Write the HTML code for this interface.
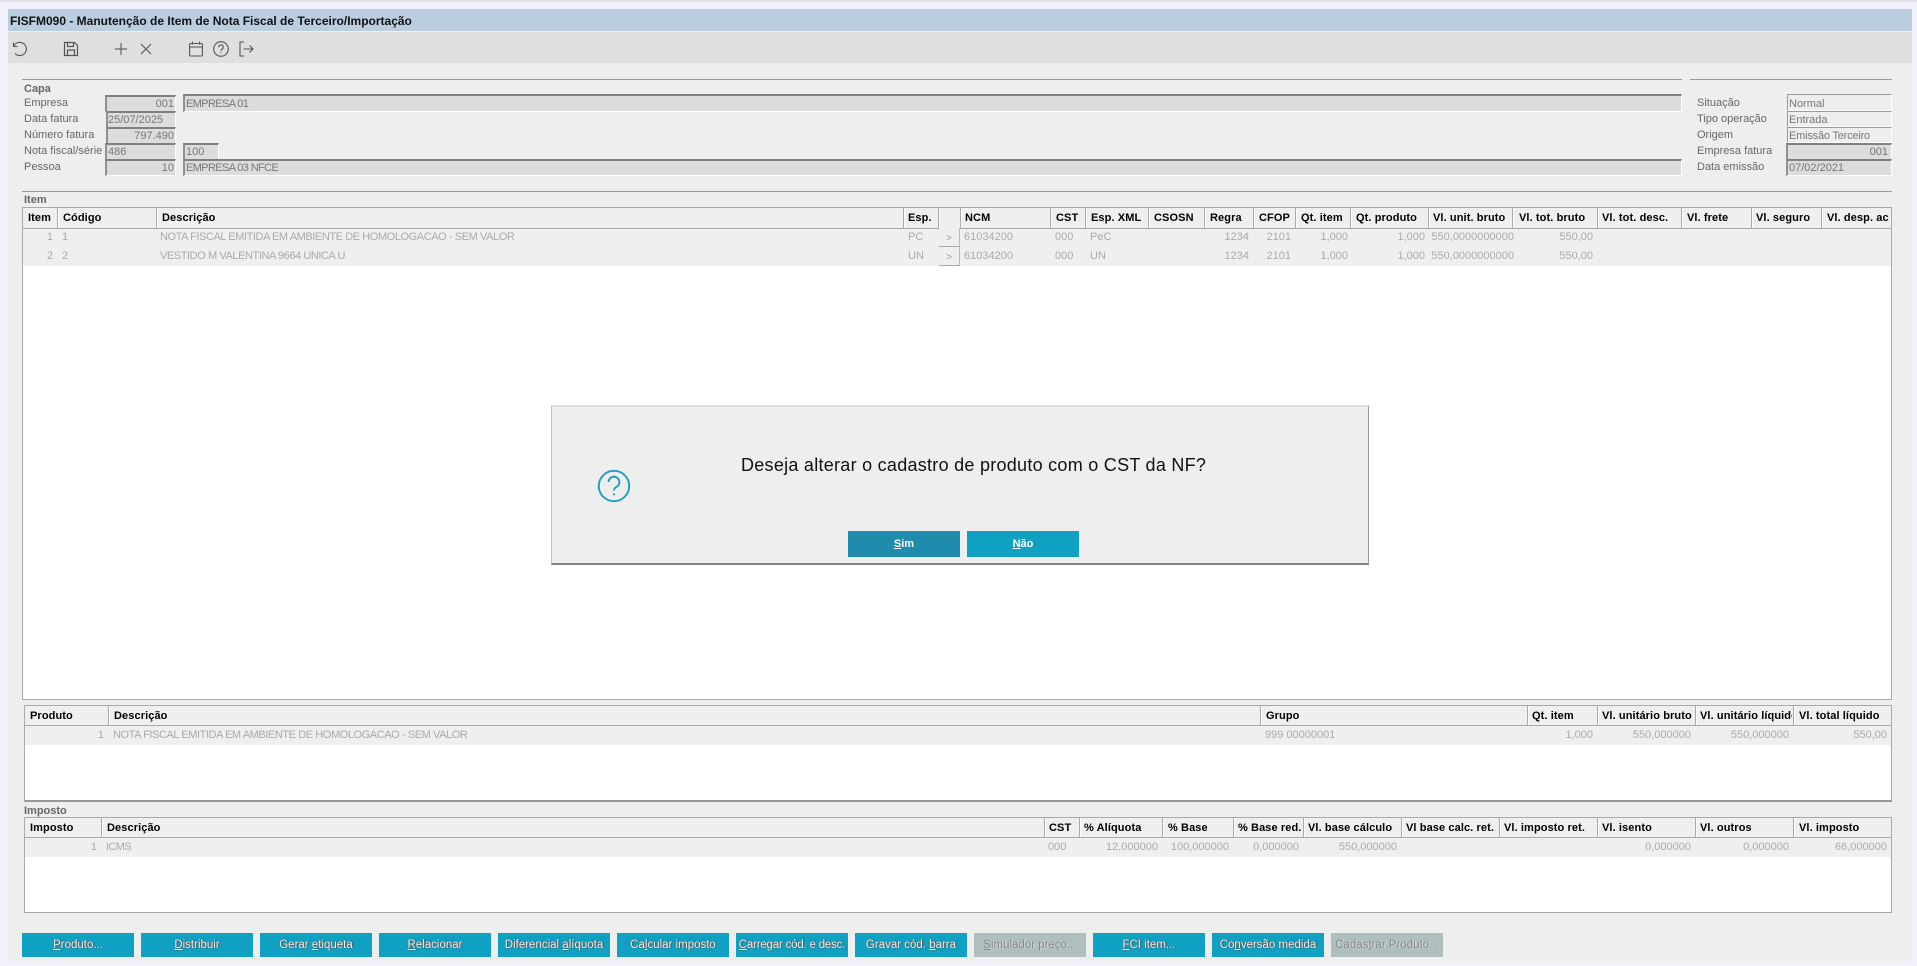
<!DOCTYPE html>
<html lang="pt"><head><meta charset="utf-8"><title>FISFM090</title>
<style>
html,body{margin:0;padding:0;width:1917px;height:966px;overflow:hidden;background:#f1f1fb;font-family:"Liberation Sans",Arial,sans-serif}
div,span.a{position:absolute;box-sizing:border-box}
.t{white-space:nowrap;font-size:11px;line-height:14px;height:14px;margin-top:1px}
.r{width:120px;margin-left:-120px;text-align:right}
.l{color:#666}
.v{color:#777}
.s{color:#666;font-weight:bold}
.h{color:#000;font-weight:bold;letter-spacing:.1px}
.d{color:#aaa}
.c{letter-spacing:-.42px}
.e{letter-spacing:-.62px}
.ln{height:1px;background:#999}
.f{background:#dcdcdc;border-top:2px solid #808080;border-left:2px solid #909090;border-right:1px solid #fff;border-bottom:1px solid #fff}
.g{background:#eee;border-top:1px solid #999;border-left:1px solid #999;border-right:1px solid #fff;border-bottom:1px solid #fff}
.fr{background:#fff;border:1px solid #aaa}
.hb{background:#efefef;border-bottom:1px solid #aaa}
.rw{background:#efefef}
.sp{width:1px;background:#aaa;box-shadow:1px 0 0 #fff}
.b{height:24px;top:933px;width:112px;background:#0fa0c2;color:#eee;font-size:11.5px;line-height:25px;text-align:center;white-space:nowrap;text-shadow:1px 0 1px #555,0 0 1px #555}
.b.o{background:#afbfbf;color:#808888;text-shadow:1px 0 1px #e4e4e4}
.pb{width:21px;height:19px;background:#efefef;border-right:1px solid #bbb;border-bottom:1px solid #aaa;color:#999;font-size:10px;line-height:21px;text-align:center}
svg{position:absolute;overflow:visible}
</style></head><body>
<!-- window -->
<div style="left:0;top:0;width:1917px;height:2px;background:#e2e2e2"></div>
<div style="left:8px;top:9px;width:1904px;height:957px;background:#eee"></div>
<div style="left:8px;top:9px;width:1904px;height:22px;background:#bacee0"></div>
<div style="left:8px;top:32px;width:1904px;height:31px;background:#dfdfdf"></div>
<div style="left:0;top:961px;width:1917px;height:5px;background:#f1f1fb"></div>
<div class="t" style="left:10px;top:13px;font-weight:bold;font-size:12px;color:#111">FISFM090 - Manutenção de Item de Nota Fiscal de Terceiro/Importação</div>

<!-- toolbar icons -->
<svg style="left:12px;top:41px" width="16" height="16" viewBox="0 0 16 16" fill="none" stroke="#555" stroke-width="1.1"><path d="M1.5 1.5V5.5H5.5"/><path d="M1.7 5.3A6.6 6.6 0 1 1 3 12.5"/></svg>
<svg style="left:63px;top:41px" width="16" height="16" viewBox="0 0 16 16" fill="none" stroke="#555" stroke-width="1.2"><path d="M1.5 1.5H11.5L14.5 4.5V14.5H1.5Z"/><path d="M4.5 1.5V5.5H10.5V1.5"/><path d="M4.5 14.5V9H11.5V14.5"/></svg>
<svg style="left:114px;top:42px" width="14" height="14" viewBox="0 0 14 14" fill="none" stroke="#666" stroke-width="1.2"><path d="M7 1V13M1 7H13"/></svg>
<svg style="left:140px;top:43px" width="12" height="12" viewBox="0 0 12 12" fill="none" stroke="#555" stroke-width="1.1"><path d="M1 1L11 11M11 1L1 11"/></svg>
<svg style="left:189px;top:41px" width="14" height="16" viewBox="0 0 14 16" fill="none" stroke="#555" stroke-width="1.1"><rect x=".6" y="2.5" width="12.8" height="12.5" rx="1"/><path d="M.6 6H13.4M3.5 .5V3.5M10.5 .5V3.5"/></svg>
<svg style="left:213px;top:41px" width="16" height="16" viewBox="0 0 16 16" fill="none" stroke="#555" stroke-width="1.1"><circle cx="8" cy="8" r="7.3"/><path d="M5.8 6.2A2.2 2.2 0 1 1 8.8 8.2C8.2 8.5 8 9 8 10"/><path d="M8 11.3V12.3"/></svg>
<svg style="left:239px;top:41px" width="15" height="16" viewBox="0 0 15 16" fill="none" stroke="#555" stroke-width="1.1"><path d="M5 1H1V15H5"/><path d="M4.5 8H14M10.5 4.5L14 8L10.5 11.5"/></svg>

<!-- Capa -->
<div class="ln" style="left:22px;top:79px;width:1660px"></div>
<div class="ln" style="left:1690px;top:79px;width:202px"></div>
<div class="t s" style="left:24px;top:81px">Capa</div>
<div class="t l" style="left:24px;top:95px">Empresa</div>
<div class="t l" style="left:24px;top:111px">Data fatura</div>
<div class="t l" style="left:24px;top:127px">Número fatura</div>
<div class="t l" style="left:24px;top:143px">Nota fiscal/série</div>
<div class="t l" style="left:24px;top:159px">Pessoa</div>

<div class="f" style="left:105px;top:95px;width:71px;height:17px"></div>
<div class="f" style="left:183px;top:94px;width:1499px;height:18px"></div>
<div class="f" style="left:106px;top:111px;width:70px;height:17px"></div>
<div class="f" style="left:106px;top:127px;width:70px;height:17px"></div>
<div class="f" style="left:105px;top:143px;width:71px;height:17px"></div>
<div class="f" style="left:183px;top:143px;width:36px;height:17px"></div>
<div class="f" style="left:105px;top:159px;width:71px;height:17px"></div>
<div class="f" style="left:183px;top:159px;width:1499px;height:17px"></div>
<div class="t v r" style="left:174px;top:96px">001</div>
<div class="t v e" style="left:186px;top:96px">EMPRESA 01</div>
<div class="t v" style="left:108px;top:112px">25/07/2025</div>
<div class="t v r" style="left:174px;top:128px">797.490</div>
<div class="t v" style="left:108px;top:144px">486</div>
<div class="t v" style="left:186px;top:144px">100</div>
<div class="t v r" style="left:174px;top:160px">10</div>
<div class="t v e" style="left:186px;top:160px">EMPRESA 03 NFCE</div>

<!-- right group -->
<div class="t l" style="left:1697px;top:95px">Situação</div>
<div class="t l" style="left:1697px;top:111px">Tipo operação</div>
<div class="t l" style="left:1697px;top:127px">Origem</div>
<div class="t l" style="left:1697px;top:143px">Empresa fatura</div>
<div class="t l" style="left:1697px;top:159px">Data emissão</div>
<div class="g" style="left:1787px;top:94px;width:105px;height:17px"></div>
<div class="g" style="left:1787px;top:111px;width:105px;height:16px"></div>
<div class="g" style="left:1787px;top:127px;width:105px;height:16px"></div>
<div class="f" style="left:1786px;top:143px;width:106px;height:17px"></div>
<div class="f" style="left:1786px;top:159px;width:106px;height:17px"></div>
<div class="t v" style="left:1789px;top:96px">Normal</div>
<div class="t v" style="left:1789px;top:112px">Entrada</div>
<div class="t v" style="left:1789px;top:128px;letter-spacing:-.2px">Emissão Terceiro</div>
<div class="t v r" style="left:1888px;top:144px">001</div>
<div class="t v" style="left:1789px;top:160px">07/02/2021</div>

<!-- Item -->
<div class="ln" style="left:22px;top:191px;width:1870px"></div>
<div class="t s" style="left:24px;top:192px">Item</div>
<div class="fr" style="left:22px;top:207px;width:1870px;height:493px"></div>
<div class="hb" style="left:23px;top:208px;width:1868px;height:21px"></div>
<div class="rw" style="left:23px;top:229px;width:1868px;height:37px"></div>
<div class="sp" style="left:57px;top:208px;height:20px"></div>
<div class="sp" style="left:156px;top:208px;height:20px"></div>
<div class="sp" style="left:903px;top:208px;height:20px"></div>
<div class="sp" style="left:938px;top:208px;height:20px"></div>
<div class="sp" style="left:960px;top:208px;height:20px"></div>
<div class="sp" style="left:1050px;top:208px;height:20px"></div>
<div class="sp" style="left:1085px;top:208px;height:20px"></div>
<div class="sp" style="left:1148px;top:208px;height:20px"></div>
<div class="sp" style="left:1204px;top:208px;height:20px"></div>
<div class="sp" style="left:1253px;top:208px;height:20px"></div>
<div class="sp" style="left:1295px;top:208px;height:20px"></div>
<div class="sp" style="left:1350px;top:208px;height:20px"></div>
<div class="sp" style="left:1428px;top:208px;height:20px"></div>
<div class="sp" style="left:1512px;top:208px;height:20px"></div>
<div class="sp" style="left:1597px;top:208px;height:20px"></div>
<div class="sp" style="left:1681px;top:208px;height:20px"></div>
<div class="sp" style="left:1751px;top:208px;height:20px"></div>
<div class="sp" style="left:1821px;top:208px;height:20px"></div>
<div class="t h" style="left:28px;top:210px">Item</div>
<div class="t h" style="left:63px;top:210px">Código</div>
<div class="t h" style="left:162px;top:210px">Descrição</div>
<div class="t h" style="left:908px;top:210px">Esp.</div>
<div class="t h" style="left:965px;top:210px">NCM</div>
<div class="t h" style="left:1056px;top:210px">CST</div>
<div class="t h" style="left:1091px;top:210px">Esp. XML</div>
<div class="t h" style="left:1154px;top:210px">CSOSN</div>
<div class="t h" style="left:1210px;top:210px">Regra</div>
<div class="t h" style="left:1259px;top:210px">CFOP</div>
<div class="t h" style="left:1301px;top:210px">Qt. item</div>
<div class="t h" style="left:1356px;top:210px">Qt. produto</div>
<div class="t h" style="left:1433px;top:210px">Vl. unit. bruto</div>
<div class="t h" style="left:1519px;top:210px">Vl. tot. bruto</div>
<div class="t h" style="left:1602px;top:210px">Vl. tot. desc.</div>
<div class="t h" style="left:1687px;top:210px">Vl. frete</div>
<div class="t h" style="left:1756px;top:210px">Vl. seguro</div>
<div class="t h" style="left:1822px;top:210px;width:68px;overflow:hidden;padding-left:5px">Vl. desp. ac</div>

<div class="pb" style="left:939px;top:228px">&gt;</div>
<div class="pb" style="left:939px;top:247px">&gt;</div>

<div class="t d r" style="left:53px;top:229px">1</div>
<div class="t d" style="left:62px;top:229px">1</div>
<div class="t d c" style="left:160px;top:229px">NOTA FISCAL EMITIDA EM AMBIENTE DE HOMOLOGACAO - SEM VALOR</div>
<div class="t d" style="left:908px;top:229px">PC</div>
<div class="t d" style="left:964px;top:229px">61034200</div>
<div class="t d" style="left:1055px;top:229px">000</div>
<div class="t d" style="left:1090px;top:229px">PeC</div>
<div class="t d r" style="left:1249px;top:229px">1234</div>
<div class="t d r" style="left:1291px;top:229px">2101</div>
<div class="t d r" style="left:1348px;top:229px">1,000</div>
<div class="t d r" style="left:1425px;top:229px">1,000</div>
<div class="t d r" style="left:1514px;top:229px">550,0000000000</div>
<div class="t d r" style="left:1593px;top:229px">550,00</div>

<div class="t d r" style="left:53px;top:248px">2</div>
<div class="t d" style="left:62px;top:248px">2</div>
<div class="t d c" style="left:160px;top:248px">VESTIDO M VALENTINA 9664 UNICA U</div>
<div class="t d" style="left:908px;top:248px">UN</div>
<div class="t d" style="left:964px;top:248px">61034200</div>
<div class="t d" style="left:1055px;top:248px">000</div>
<div class="t d" style="left:1090px;top:248px">UN</div>
<div class="t d r" style="left:1249px;top:248px">1234</div>
<div class="t d r" style="left:1291px;top:248px">2101</div>
<div class="t d r" style="left:1348px;top:248px">1,000</div>
<div class="t d r" style="left:1425px;top:248px">1,000</div>
<div class="t d r" style="left:1514px;top:248px">550,0000000000</div>
<div class="t d r" style="left:1593px;top:248px">550,00</div>

<!-- Produto table -->
<div class="fr" style="left:24px;top:705px;width:1868px;height:97px;border-bottom:2px solid #999"></div>
<div class="hb" style="left:25px;top:706px;width:1866px;height:20px"></div>
<div class="rw" style="left:25px;top:726px;width:1866px;height:19px"></div>
<div class="sp" style="left:108px;top:706px;height:19px"></div>
<div class="sp" style="left:1260px;top:706px;height:19px"></div>
<div class="sp" style="left:1527px;top:706px;height:19px"></div>
<div class="sp" style="left:1597px;top:706px;height:19px"></div>
<div class="sp" style="left:1695px;top:706px;height:19px"></div>
<div class="sp" style="left:1793px;top:706px;height:19px"></div>
<div class="t h" style="left:30px;top:708px">Produto</div>
<div class="t h" style="left:114px;top:708px">Descrição</div>
<div class="t h" style="left:1266px;top:708px">Grupo</div>
<div class="t h" style="left:1532px;top:708px">Qt. item</div>
<div class="t h" style="left:1602px;top:708px;width:92px;overflow:hidden">Vl. unitário bruto</div>
<div class="t h" style="left:1700px;top:708px;width:92px;overflow:hidden">Vl. unitário líquido</div>
<div class="t h" style="left:1799px;top:708px">Vl. total líquido</div>
<div class="t d r" style="left:104px;top:727px">1</div>
<div class="t d c" style="left:113px;top:727px">NOTA FISCAL EMITIDA EM AMBIENTE DE HOMOLOGACAO - SEM VALOR</div>
<div class="t d" style="left:1265px;top:727px">999 00000001</div>
<div class="t d r" style="left:1593px;top:727px">1,000</div>
<div class="t d r" style="left:1691px;top:727px">550,000000</div>
<div class="t d r" style="left:1789px;top:727px">550,000000</div>
<div class="t d r" style="left:1887px;top:727px">550,00</div>

<!-- Imposto -->
<div class="t s" style="left:24px;top:803px">Imposto</div>
<div class="fr" style="left:24px;top:817px;width:1868px;height:96px"></div>
<div class="hb" style="left:25px;top:818px;width:1866px;height:20px"></div>
<div class="rw" style="left:25px;top:838px;width:1866px;height:19px"></div>
<div class="sp" style="left:101px;top:818px;height:19px"></div>
<div class="sp" style="left:1044px;top:818px;height:19px"></div>
<div class="sp" style="left:1079px;top:818px;height:19px"></div>
<div class="sp" style="left:1162px;top:818px;height:19px"></div>
<div class="sp" style="left:1233px;top:818px;height:19px"></div>
<div class="sp" style="left:1303px;top:818px;height:19px"></div>
<div class="sp" style="left:1401px;top:818px;height:19px"></div>
<div class="sp" style="left:1499px;top:818px;height:19px"></div>
<div class="sp" style="left:1597px;top:818px;height:19px"></div>
<div class="sp" style="left:1695px;top:818px;height:19px"></div>
<div class="sp" style="left:1793px;top:818px;height:19px"></div>
<div class="t h" style="left:30px;top:820px">Imposto</div>
<div class="t h" style="left:107px;top:820px">Descrição</div>
<div class="t h" style="left:1049px;top:820px">CST</div>
<div class="t h" style="left:1084px;top:820px">% Alíquota</div>
<div class="t h" style="left:1168px;top:820px">% Base</div>
<div class="t h" style="left:1238px;top:820px;width:65px;overflow:hidden">% Base red.</div>
<div class="t h" style="left:1308px;top:820px">Vl. base cálculo</div>
<div class="t h" style="left:1406px;top:820px">Vl base calc. ret.</div>
<div class="t h" style="left:1504px;top:820px">Vl. imposto ret.</div>
<div class="t h" style="left:1602px;top:820px">Vl. isento</div>
<div class="t h" style="left:1700px;top:820px">Vl. outros</div>
<div class="t h" style="left:1799px;top:820px">Vl. imposto</div>
<div class="t d r" style="left:97px;top:839px">1</div>
<div class="t d e" style="left:106px;top:839px">ICMS</div>
<div class="t d" style="left:1048px;top:839px">000</div>
<div class="t d r" style="left:1158px;top:839px">12,000000</div>
<div class="t d r" style="left:1229px;top:839px">100,000000</div>
<div class="t d r" style="left:1299px;top:839px">0,000000</div>
<div class="t d r" style="left:1397px;top:839px">550,000000</div>
<div class="t d r" style="left:1691px;top:839px">0,000000</div>
<div class="t d r" style="left:1789px;top:839px">0,000000</div>
<div class="t d r" style="left:1887px;top:839px">66,000000</div>

<!-- Buttons -->
<div class="b" style="left:22px"><u>P</u>roduto...</div>
<div class="b" style="left:141px"><u>D</u>istribuir</div>
<div class="b" style="left:260px">Gerar <u>e</u>tiqueta</div>
<div class="b" style="left:379px"><u>R</u>elacionar</div>
<div class="b" style="left:498px">Diferencial <u>a</u>líquota</div>
<div class="b" style="left:617px">Ca<u>l</u>cular imposto</div>
<div class="b" style="left:736px;letter-spacing:-.2px"><u>C</u>arregar cód. e desc.</div>
<div class="b" style="left:855px">Gravar cód. <u>b</u>arra</div>
<div class="b o" style="left:974px"><u>S</u>imulador preço...</div>
<div class="b" style="left:1093px"><u>F</u>CI item...</div>
<div class="b" style="left:1212px">Co<u>n</u>versão medida</div>
<div class="b o" style="left:1331px">Cadas<u>t</u>rar Produto...</div>

<!-- Dialog -->
<div style="left:551px;top:405px;width:818px;height:160px;background:#eee;border-top:2px solid #ddd;border-left:1px solid #c4c4c4;border-right:1px solid #999;border-bottom:2px solid #808080"></div>
<svg style="left:598px;top:470px" width="32" height="32" viewBox="0 0 32 32" fill="none" stroke="#1b9cc0" stroke-width="1.9"><circle cx="16" cy="16" r="15.2"/><path d="M10.6 12A5.4 5.4 0 1 1 18.8 16.7C17 17.7 16 18.7 16 20.5"/><path d="M16 23.5V25.2" stroke-width="2"/></svg>
<div class="t" style="left:741px;top:453px;height:22px;line-height:22px;font-size:18px;color:#111;letter-spacing:.27px">Deseja alterar o cadastro de produto com o CST da NF?</div>
<div style="left:848px;top:531px;width:112px;height:26px;background:#1f8bad;color:#fff;font-size:11px;font-weight:bold;line-height:27px;text-align:center"><u>S</u>im</div>
<div style="left:967px;top:531px;width:112px;height:26px;background:#0fa0c2;color:#fff;font-size:11px;font-weight:bold;line-height:27px;text-align:center"><u>N</u>ão</div>
</body></html>
